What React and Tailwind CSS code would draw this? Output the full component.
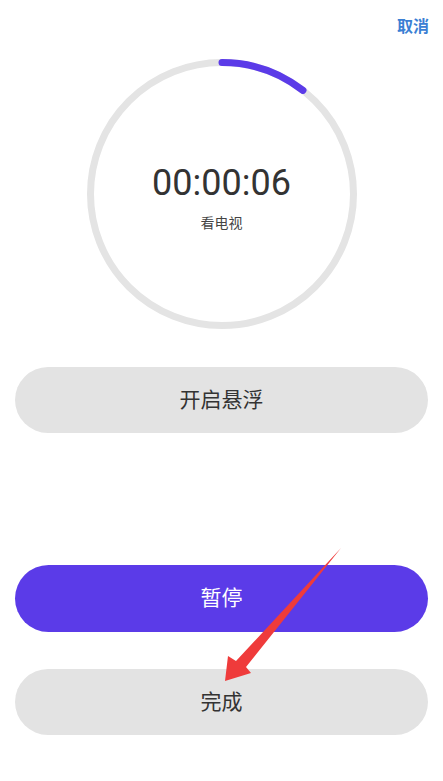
import React from "react";

export default function App() {
  const cx = 135;
  const r = 131.5;
  const ang = (38 * Math.PI) / 180;
  const ex = cx + r * Math.sin(ang);
  const ey = cx - r * Math.cos(ang);
  return (
    <div
      className="relative w-full h-[781px] bg-white flex flex-col overflow-hidden"
      style={{ fontFamily: 'Roboto, "Noto Sans CJK SC", sans-serif' }}
    >
      <div className="flex justify-end pt-[17px] pr-[14px] h-[59px]">
        <span className="text-[16px] leading-[20px] font-bold text-[#3b7fd4]">取消</span>
      </div>

      <div className="relative mx-auto w-[270px] h-[270px] flex flex-col items-center">
        <svg className="absolute inset-0" width="270" height="270" viewBox="0 0 270 270">
          <circle cx={cx} cy={cx} r={r} fill="none" stroke="#e4e4e4" strokeWidth="7" />
          <path
            d={`M ${cx} ${cx - r} A ${r} ${r} 0 0 1 ${ex} ${ey}`}
            fill="none"
            stroke="#5b3be8"
            strokeWidth="7"
            strokeLinecap="round"
          />
        </svg>
        <div className="relative mt-[102px] text-[36px] leading-[44px] text-[#333] font-normal">
          00:00:06
        </div>
        <div className="relative mt-[9px] text-[14px] leading-[18px] text-[#444]">看电视</div>
      </div>

      <div className="mt-[38px] mx-[15px] h-[66px] rounded-full bg-[#e3e3e3] flex items-center justify-center text-[21px] text-[#333] pt-[2px]">
        开启悬浮
      </div>

      <div className="mt-[132px] mx-[15px] h-[67px] rounded-full bg-[#5b3be8] flex items-center justify-center text-[21px] text-white pt-[1px]">
        暂停
      </div>

      <div className="mt-[37px] mx-[15px] h-[66px] rounded-full bg-[#e3e3e3] flex items-center justify-center text-[21px] text-[#333] pt-[2px]">
        完成
      </div>

      <svg className="absolute inset-0 pointer-events-none" width="443" height="781" viewBox="0 0 443 781">
        <polygon
          points="341,548 236,661 228,656 225,681 251,673 246,667"
          fill="#ef3b3b"
        />
      </svg>
    </div>
  );
}
